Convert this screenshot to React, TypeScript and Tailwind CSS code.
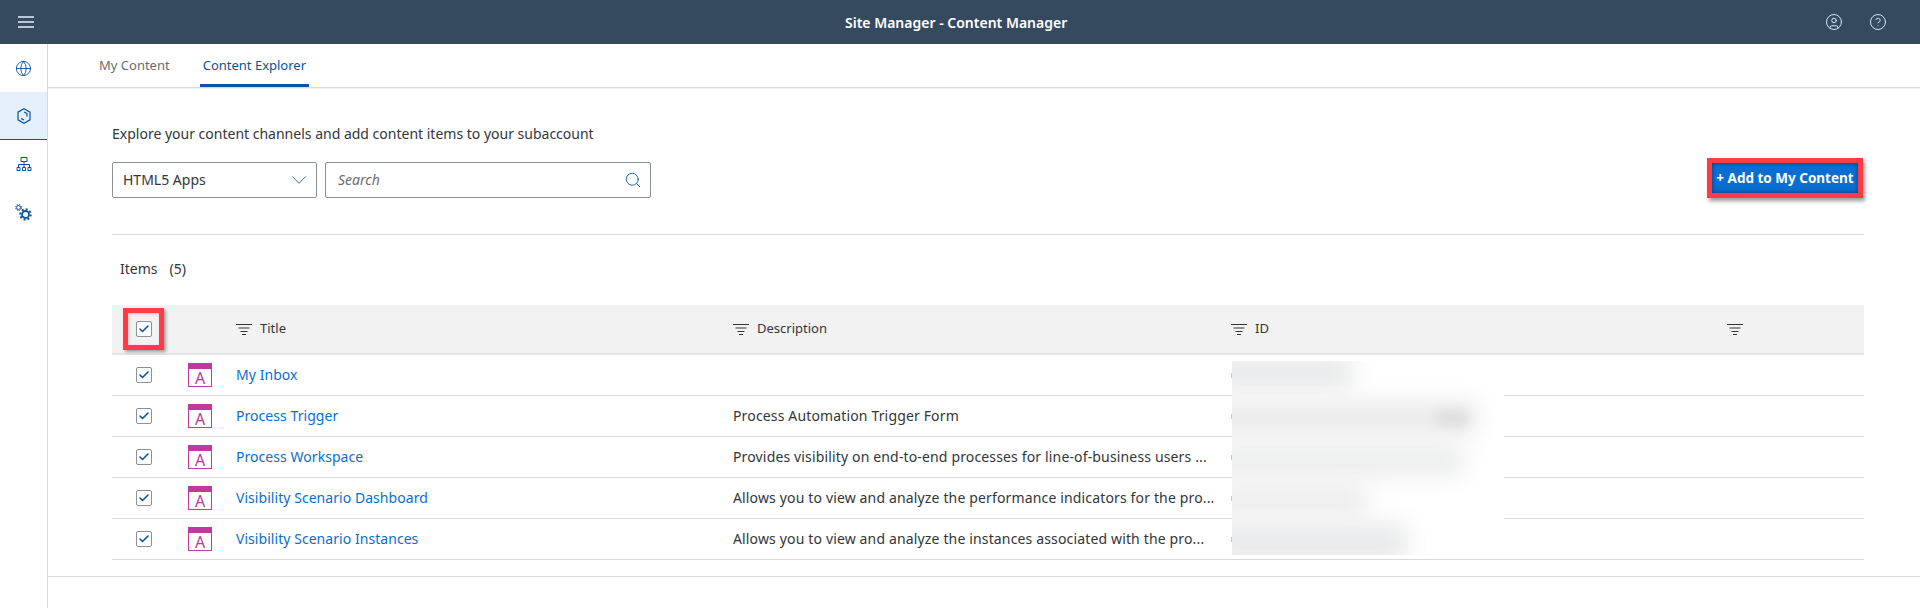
import React from 'react';
import { Globe, Search, ChevronDown, CircleHelp, CircleUser, Check } from 'lucide-react';

interface Row {
    title: string;
    description: string;
}

const rows: Row[] = [
    { title: 'My Inbox', description: '' },
    { title: 'Process Trigger', description: 'Process Automation Trigger Form' },
    { title: 'Process Workspace', description: 'Provides visibility on end-to-end processes for line-of-business users ...' },
    { title: 'Visibility Scenario Dashboard', description: 'Allows you to view and analyze the performance indicators for the pro...' },
    { title: 'Visibility Scenario Instances', description: 'Allows you to view and analyze the instances associated with the pro...' },
];

const FilterIcon = () => (
    <svg width="16" height="11" viewBox="0 0 16 11" className="shrink-0 text-[#32363a]">
        <path d="M0 .5h16M2.5 4h11M4.5 7.5h7M6 10.5h4" stroke="currentColor" fill="none" />
    </svg>
);

const CheckBox = () => (
    <div className="w-4 h-4 border border-[#89919a] rounded-[2px] bg-white flex items-center justify-center">
        <Check size={12} strokeWidth={3.2} className="text-[#0854a0]" />
    </div>
);

const AppIcon = () => (
    <div className="w-6 h-6 border-[1.5px] border-t-[6px] border-[#c0399f] flex items-end justify-center">
        <span className="text-[#c0399f] text-[16px] leading-[16px]">A</span>
    </div>
);

const HexIcon = () => (
    <svg width="16" height="16" viewBox="0 0 16 16" fill="none" stroke="#0854a0" strokeWidth="1.2">
        <path d="M8 .8l6 3.4v7.6L8 15.2l-6-3.4V4.2z" />
        <path d="M5 10.5l3 1.5M8 4l3 1.5v3" />
    </svg>
);

const SitemapIcon = () => (
    <svg width="16" height="16" viewBox="0 0 16 16" fill="none" stroke="#0854a0">
        <path d="M5 1.5h6v4H5zM1 11.5h3v3H1zM6.5 11.5h3v3h-3zM12 11.5h3v3h-3zM8 5.5v6M2.5 11.5v-3h11v3" />
    </svg>
);

const GearsIcon = () => (
    <svg width="17" height="17" viewBox="0 0 17 17" fill="none" stroke="#0854a0">
        <circle cx="3.5" cy="3.5" r="2" />
        <circle cx="3.5" cy="3.5" r="3" strokeDasharray="1.2 1.2" />
        <circle cx="10.5" cy="10.5" r="3.5" strokeWidth="1.8" />
        <circle cx="10.5" cy="10.5" r="5.2" strokeWidth="2" strokeDasharray="2 2" />
    </svg>
);

const NavItem = ({ active, children }: { active?: boolean; children: React.ReactNode }) => (
    <div className={active ? 'h-12 flex items-center justify-center bg-[#e5f0fa] border-b border-[#0854a0]' : 'h-12 flex items-center justify-center'}>
        {children}
    </div>
);

export default function App() {
    return (
        <div className="h-[608px] overflow-hidden flex flex-col bg-white text-[14px] text-[#32363a] font-['Noto_Sans',sans-serif]">
            <header className="h-11 shrink-0 bg-[#354a5f] flex items-center pl-[18px] pr-[33px]">
                <svg width="16" height="12" viewBox="0 0 16 12" fill="none" stroke="#e3f1ff" strokeWidth="1.5">
                    <path d="M0 1h16M0 6h16M0 11h16" />
                </svg>
                <span className="ml-[811px] text-white font-semibold text-[14px]">Site Manager - Content Manager</span>
                <div className="ml-auto flex items-center gap-[26px]">
                    <CircleUser size={18} strokeWidth={1.3} className="text-[#d1e8ff]" />
                    <CircleHelp size={18} strokeWidth={1.3} className="text-[#d1e8ff]" />
                </div>
            </header>
            <div className="flex-1 flex min-h-0">
                <nav className="w-12 shrink-0 border-r border-[#d9d9d9]">
                    <NavItem><Globe size={17} strokeWidth={1.3} className="text-[#0854a0]" /></NavItem>
                    <NavItem active><HexIcon /></NavItem>
                    <NavItem><SitemapIcon /></NavItem>
                    <NavItem><GearsIcon /></NavItem>
                </nav>
                <main className="flex-1 min-w-0 flex flex-col">
                    <div className="h-11 border-b border-[#d9d9d9] flex pl-[51px] gap-[30px] items-stretch text-[13px] shadow-[0_1px_1px_rgba(0,0,0,0.05)]">
                        <div className="flex items-center text-[#6a6d70]">My Content</div>
                        <div className="flex items-center text-[#0854a0] px-[3px] border-b-[3px] border-[#0854a0] pt-[3px]">Content Explorer</div>
                    </div>
                    <div className="h-[489px] px-[64px] pt-[36px] border-b border-[#d9d9d9]">
                        <div className="w-[1752px]">
                            <p className="leading-5">Explore your content channels and add content items to your subaccount</p>
                            <div className="flex items-start mt-[18px]">
                                <div className="w-[205px] h-9 border border-[#89919a] rounded-[2px] flex items-center justify-between pl-[10px] pr-[4px]">
                                    <span className="pb-px">HTML5 Apps</span>
                                    <ChevronDown size={26} strokeWidth={0.8} className="text-[#0854a0]" />
                                </div>
                                <div className="ml-2 w-[326px] h-9 border border-[#89919a] rounded-[2px] flex items-center justify-between pl-[12px] pr-[8px]">
                                    <span className="italic text-[#6a6d70] pb-px">Search</span>
                                    <Search size={18} strokeWidth={1.2} className="text-[#0854a0]" />
                                </div>
                                <div className="ml-auto mr-px -mt-1 -mb-px w-[156px] h-10 border-[5px] border-[#ff3b45] shadow-[2px_3px_4px_rgba(0,0,0,0.4),inset_0_0_4px_rgba(0,30,80,0.7)] bg-[#0a6ed1] flex items-center justify-center">
                                    <span className="text-white font-bold text-[13.5px] whitespace-nowrap">+ Add to My Content</span>
                                </div>
                            </div>
                            <div className="mt-[36px] border-t border-[#d9d9d9] pt-6 pl-2 leading-5">Items<span className="ml-3">(5)</span></div>
                            <div className="relative mt-[26px]">
                                <div className="h-[50px] bg-[#f2f2f2] border-b-2 border-[#e5e5e5] flex items-center relative text-[13px]">
                                    <div className="w-[124px] shrink-0 pl-[24px]"><CheckBox /></div>
                                    <div className="w-[497px] shrink-0 flex items-center gap-2"><FilterIcon /><span>Title</span></div>
                                    <div className="w-[498px] shrink-0 flex items-center gap-2"><FilterIcon /><span>Description</span></div>
                                    <div className="w-[496px] shrink-0 flex items-center gap-2"><FilterIcon /><span>ID</span></div>
                                    <FilterIcon />
                                    <div className="absolute left-[11px] top-[3px] w-[41px] h-[42px] border-[5px] border-[#ff3b45] shadow-[2px_2px_3px_rgba(0,0,0,0.35),inset_1px_1px_3px_rgba(0,0,0,0.2)]" />
                                </div>
                                {rows.map((row) => (
                                    <div key={row.title} className="h-[41px] border-b border-[#d9d9d9] flex items-center">
                                        <div className="w-[76px] shrink-0 pl-[24px]"><CheckBox /></div>
                                        <div className="w-[48px] shrink-0"><AppIcon /></div>
                                        <div className="w-[497px] shrink-0 text-[#0a6ed1] tracking-[0.05px] pb-[2px]">{row.title}</div>
                                        <div className="w-[498px] shrink-0 tracking-[0.15px] truncate pb-[2px]">{row.description}</div>
                                    </div>
                                ))}
                                {/* blurred ids */}
                                <div className="absolute left-[1120px] top-[56px] w-[272px] h-[194px] bg-white overflow-hidden">
                                    <div className="-mt-[6px] -ml-5 w-[140px] h-[34px] bg-[#e8e9ea] blur-[11px]" />
                                    <div className="mt-3 -ml-5 w-[265px] h-[34px] bg-[#ebebec] blur-[11px]" />
                                    <div className="mt-2 -ml-5 w-[252px] h-[34px] bg-[#edeeee] blur-[11px]" />
                                    <div className="mt-[6px] -ml-5 w-[155px] h-[34px] bg-[#eeeeef] blur-[11px]" />
                                    <div className="mt-[6px] -ml-5 w-[195px] h-[40px] bg-[#e9eaeb] blur-[11px]" />
                                    <div className="absolute left-[205px] top-[50px] w-[30px] h-[14px] bg-[#dcdcdc] blur-[6px]" />
                                </div>
                                <div className="absolute left-[1119px] top-[56px] flex flex-col pt-[12px] gap-[36px]">
                                    {rows.map((row) => (
                                        <span key={row.title} className="block w-px h-[5px] bg-[#eec48e]" />
                                    ))}
                                </div>
                            </div>
                        </div>
                    </div>
                </main>
            </div>
        </div>
    );
}
